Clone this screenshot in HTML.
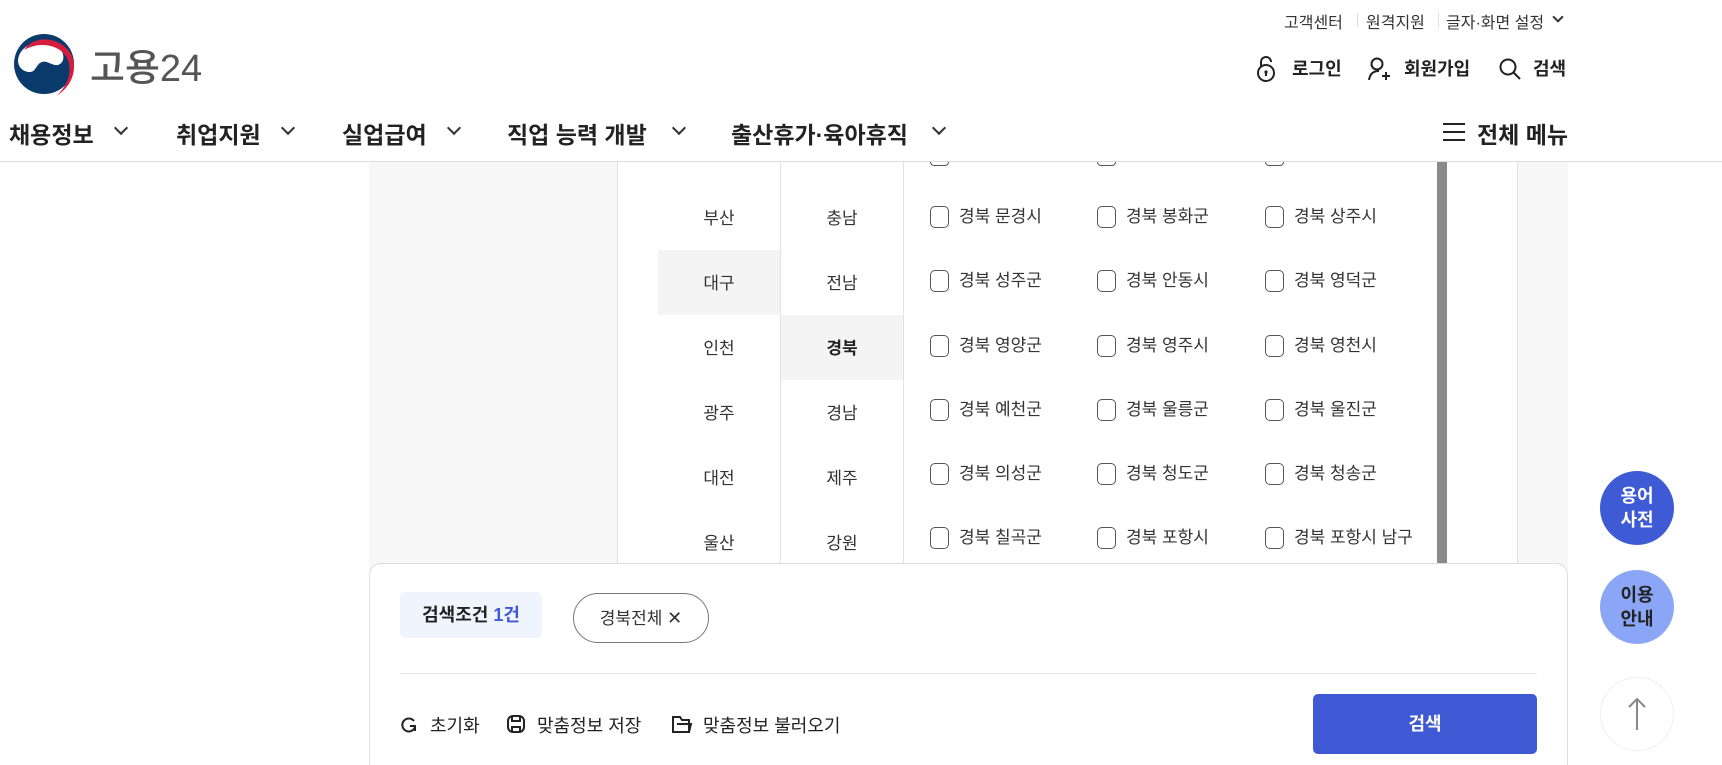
<!DOCTYPE html>
<html><head><meta charset="utf-8"><style>
*{margin:0;padding:0;box-sizing:border-box}
html{width:1722px;height:765px;overflow:hidden}
body{width:1722px;height:765px;overflow:hidden;background:#fff;font-family:"Liberation Sans","Noto Sans CJK KR",sans-serif;color:#222;position:relative}
.a{position:absolute;white-space:nowrap}
.util{top:9px;font-size:16px;color:#333}
.sep{top:13px;width:1px;height:14px;background:#ddd}
.lr{top:55px;font-size:18px;font-weight:600;color:#222}
.nav{top:116px;font-size:23px;font-weight:700;color:#222}
.chev{position:absolute;width:10px;height:10px;border-right:2px solid #333;border-bottom:2px solid #333;transform:rotate(45deg)}
.hdrbg{position:absolute;left:0;top:0;width:1722px;height:161px;background:#fff;z-index:1}
.hdr{position:absolute;left:0;top:161px;width:1722px;height:1px;background:#ddd;z-index:3}
.z{z-index:2}
.lbl{font-size:17px;color:#333;text-align:center;width:100px}
.cb{position:absolute;width:19px;height:22px;border:1px solid #555;border-radius:5px;background:#fff}
.ct{font-size:17px;color:#333}
.circ{position:absolute;width:74px;height:74px;border-radius:50%;display:flex;align-items:center;justify-content:center;text-align:center;font-size:18px;font-weight:700;line-height:24px}
</style></head><body>

<div class="cb" style="left:930px;top:144px"></div>
<div class="cb" style="left:1097px;top:144px"></div>
<div class="cb" style="left:1265px;top:144px"></div>

<div class="hdrbg" style="height:161px"></div>

<svg class="a z" style="left:10px;top:30px" width="70" height="70" viewBox="0 0 70 70">
<circle cx="34" cy="34" r="30" fill="#0b3a6d"/>
<path d="M8 30 C10 14 30 8 44 14 C54 19 56 30 50 34 C44 38 38 30 32 32 C26 34 26 42 20 42 C14 42 8 38 8 30Z" fill="#fff"/>
<path d="M14 20 C24 4 52 6 62 26 C68 42 60 58 46 66 C58 56 62 42 58 30 C52 16 32 10 14 20Z" fill="#d51d3d"/>
</svg>
<div class="a z" style="left:90px;top:37px;font-size:38px;color:#555;font-weight:500">고용24</div>

<div class="a util z" style="left:1284px">고객센터</div>
<div class="a sep z" style="left:1357px"></div>
<div class="a util z" style="left:1366px">원격지원</div>
<div class="a sep z" style="left:1438px"></div>
<div class="a util z" style="left:1446px">글자·화면 설정</div>
<div class="chev z" style="left:1554px;top:13px;width:8px;height:8px"></div>

<svg class="a z" style="left:1255px;top:55px" width="22" height="28" viewBox="0 0 22 28"><path d="M6 12 V7 a5 5 0 0 1 10 0" fill="none" stroke="#222" stroke-width="2"/><circle cx="11" cy="18" r="8" fill="none" stroke="#222" stroke-width="2"/><circle cx="11" cy="17" r="1.6" fill="#222"/><path d="M11 18v3" stroke="#222" stroke-width="2"/></svg>
<div class="a lr z" style="left:1292px">로그인</div>
<svg class="a z" style="left:1367px;top:56px" width="26" height="26" viewBox="0 0 26 26"><circle cx="10" cy="8" r="5.5" fill="none" stroke="#222" stroke-width="2"/><path d="M2 24 C3 17 7 15 12 15" fill="none" stroke="#222" stroke-width="2"/><path d="M15 20h8M19 16v8" stroke="#222" stroke-width="2"/></svg>
<div class="a lr z" style="left:1404px">회원가입</div>
<svg class="a z" style="left:1498px;top:57px" width="24" height="24" viewBox="0 0 24 24"><circle cx="10" cy="10" r="7.5" fill="none" stroke="#222" stroke-width="2"/><path d="M15.5 15.5L22 22" stroke="#222" stroke-width="2"/></svg>
<div class="a lr z" style="left:1533px">검색</div>

<div class="a nav z" style="left:9px">채용정보</div><div class="chev z" style="left:116px;top:123px"></div>
<div class="a nav z" style="left:176px">취업지원</div><div class="chev z" style="left:283px;top:123px"></div>
<div class="a nav z" style="left:342px">실업급여</div><div class="chev z" style="left:449px;top:123px"></div>
<div class="a nav z" style="left:507px">직업 능력 개발</div><div class="chev z" style="left:674px;top:123px"></div>
<div class="a nav z" style="left:731px">출산휴가·육아휴직</div><div class="chev z" style="left:934px;top:123px"></div>
<div class="a z" style="left:1443px;top:123px;width:22px;height:2px;background:#222;box-shadow:0 8px 0 #222,0 16px 0 #222"></div>
<div class="a nav z" style="left:1477px">전체 메뉴</div>
<div class="hdr"></div>

<div class="a" style="left:369px;top:162px;width:1199px;height:410px;background:#f7f7f7"></div>
<div class="a" style="left:617px;top:162px;width:901px;height:410px;background:#fff;border-left:1px solid #e2e2e2;border-right:1px solid #e2e2e2"></div>
<div class="a" style="left:780px;top:162px;width:1px;height:410px;background:#e2e2e2"></div>
<div class="a" style="left:903px;top:162px;width:1px;height:410px;background:#e2e2e2"></div>
<div class="a" style="left:658px;top:250px;width:122px;height:65px;background:#f4f4f4"></div>
<div class="a" style="left:781px;top:315px;width:122px;height:65px;background:#f4f4f4"></div>
<div class="a" style="left:1437px;top:162px;width:10px;height:410px;background:#8a8a8a"></div>
<!-- sliver of top-row checkboxes visible below header -->
<div class="a" style="left:930px;top:162px;width:19px;height:4px;border:1px solid #555;border-top:none;border-radius:0 0 5px 5px"></div>
<div class="a" style="left:1097px;top:162px;width:19px;height:4px;border:1px solid #555;border-top:none;border-radius:0 0 5px 5px"></div>
<div class="a" style="left:1265px;top:162px;width:19px;height:4px;border:1px solid #555;border-top:none;border-radius:0 0 5px 5px"></div>

<div class="a lbl" style="left:669px;top:204px">부산</div>
<div class="a lbl" style="left:669px;top:269px">대구</div>
<div class="a lbl" style="left:669px;top:334px">인천</div>
<div class="a lbl" style="left:669px;top:399px">광주</div>
<div class="a lbl" style="left:669px;top:464px">대전</div>
<div class="a lbl" style="left:669px;top:529px">울산</div>
<div class="a lbl" style="left:792px;top:204px">충남</div>
<div class="a lbl" style="left:792px;top:269px">전남</div>
<div class="a lbl" style="left:792px;top:334px;font-weight:700;color:#222">경북</div>
<div class="a lbl" style="left:792px;top:399px">경남</div>
<div class="a lbl" style="left:792px;top:464px">제주</div>
<div class="a lbl" style="left:792px;top:529px">강원</div>

<div class="cb" style="left:930px;top:206px"></div><div class="a ct" style="left:959px;top:202px">경북 문경시</div>
<div class="cb" style="left:1097px;top:206px"></div><div class="a ct" style="left:1126px;top:202px">경북 봉화군</div>
<div class="cb" style="left:1265px;top:206px"></div><div class="a ct" style="left:1294px;top:202px">경북 상주시</div>

<div class="cb" style="left:930px;top:270px"></div><div class="a ct" style="left:959px;top:266px">경북 성주군</div>
<div class="cb" style="left:1097px;top:270px"></div><div class="a ct" style="left:1126px;top:266px">경북 안동시</div>
<div class="cb" style="left:1265px;top:270px"></div><div class="a ct" style="left:1294px;top:266px">경북 영덕군</div>

<div class="cb" style="left:930px;top:335px"></div><div class="a ct" style="left:959px;top:331px">경북 영양군</div>
<div class="cb" style="left:1097px;top:335px"></div><div class="a ct" style="left:1126px;top:331px">경북 영주시</div>
<div class="cb" style="left:1265px;top:335px"></div><div class="a ct" style="left:1294px;top:331px">경북 영천시</div>

<div class="cb" style="left:930px;top:399px"></div><div class="a ct" style="left:959px;top:395px">경북 예천군</div>
<div class="cb" style="left:1097px;top:399px"></div><div class="a ct" style="left:1126px;top:395px">경북 울릉군</div>
<div class="cb" style="left:1265px;top:399px"></div><div class="a ct" style="left:1294px;top:395px">경북 울진군</div>

<div class="cb" style="left:930px;top:463px"></div><div class="a ct" style="left:959px;top:459px">경북 의성군</div>
<div class="cb" style="left:1097px;top:463px"></div><div class="a ct" style="left:1126px;top:459px">경북 청도군</div>
<div class="cb" style="left:1265px;top:463px"></div><div class="a ct" style="left:1294px;top:459px">경북 청송군</div>

<div class="cb" style="left:930px;top:527px"></div><div class="a ct" style="left:959px;top:523px">경북 칠곡군</div>
<div class="cb" style="left:1097px;top:527px"></div><div class="a ct" style="left:1126px;top:523px">경북 포항시</div>
<div class="cb" style="left:1265px;top:527px"></div><div class="a ct" style="left:1294px;top:523px">경북 포항시 남구</div>

<div class="a" style="left:369px;top:563px;width:1199px;height:202px;background:#fff;border:1px solid #ddd;border-bottom:none;border-radius:12px 12px 0 0"></div>
<div class="a" style="left:400px;top:592px;width:142px;height:46px;background:#f0f5fd;border-radius:5px;font-size:18px;font-weight:700;line-height:46px;text-align:center;color:#222">검색조건 <span style="color:#3f58d4">1건</span></div>
<div class="a" style="left:573px;top:593px;width:136px;height:50px;border:1px solid #777;border-radius:25px;font-size:17px;line-height:48px;text-align:center;color:#333">경북전체 <span style="font-size:18px">✕</span></div>
<div class="a" style="left:400px;top:673px;width:1137px;height:1px;background:#e6e6e6"></div>

<svg class="a" style="left:400px;top:716px" width="18" height="18" viewBox="0 0 18 18"><path d="M14 5 A6.5 6.5 0 1 0 15 11" fill="none" stroke="#222" stroke-width="2"/><path d="M10 10h5v5" fill="none" stroke="#222" stroke-width="2"/></svg>
<div class="a" style="left:430px;top:712px;font-size:18px;color:#222">초기화</div>
<svg class="a" style="left:506px;top:714px" width="20" height="20" viewBox="0 0 20 20"><rect x="2" y="2" width="16" height="16" rx="5" fill="none" stroke="#222" stroke-width="2"/><path d="M6 2v5h8V2M6 18v-5h8v5" fill="none" stroke="#222" stroke-width="2"/></svg>
<div class="a" style="left:537px;top:712px;font-size:18px;color:#222">맞춤정보 저장</div>
<svg class="a" style="left:671px;top:715px" width="22" height="19" viewBox="0 0 22 19"><path d="M2 2h7l2 3h7v12H2z" fill="none" stroke="#222" stroke-width="2"/><path d="M6 9h14l-2 8" fill="none" stroke="#222" stroke-width="2"/></svg>
<div class="a" style="left:703px;top:712px;font-size:18px;color:#222">맞춤정보 불러오기</div>

<div class="a" style="left:1313px;top:694px;width:224px;height:60px;background:#3f58d4;border-radius:5px;color:#fff;font-size:18px;font-weight:700;text-align:center;line-height:60px">검색</div>

<div class="circ" style="left:1600px;top:471px;background:#3e5ad4;color:#fff">용어<br>사전</div>
<div class="circ" style="left:1600px;top:570px;background:#8ca6f7;color:#222;font-weight:600">이용<br>안내</div>
<div class="circ" style="left:1600px;top:677px;background:#fff;border:1px solid #eee">
<svg width="20" height="36" viewBox="0 0 20 36"><path d="M10 34V3M2 11l8-8 8 8" fill="none" stroke="#888" stroke-width="2"/></svg></div>
</body></html>
